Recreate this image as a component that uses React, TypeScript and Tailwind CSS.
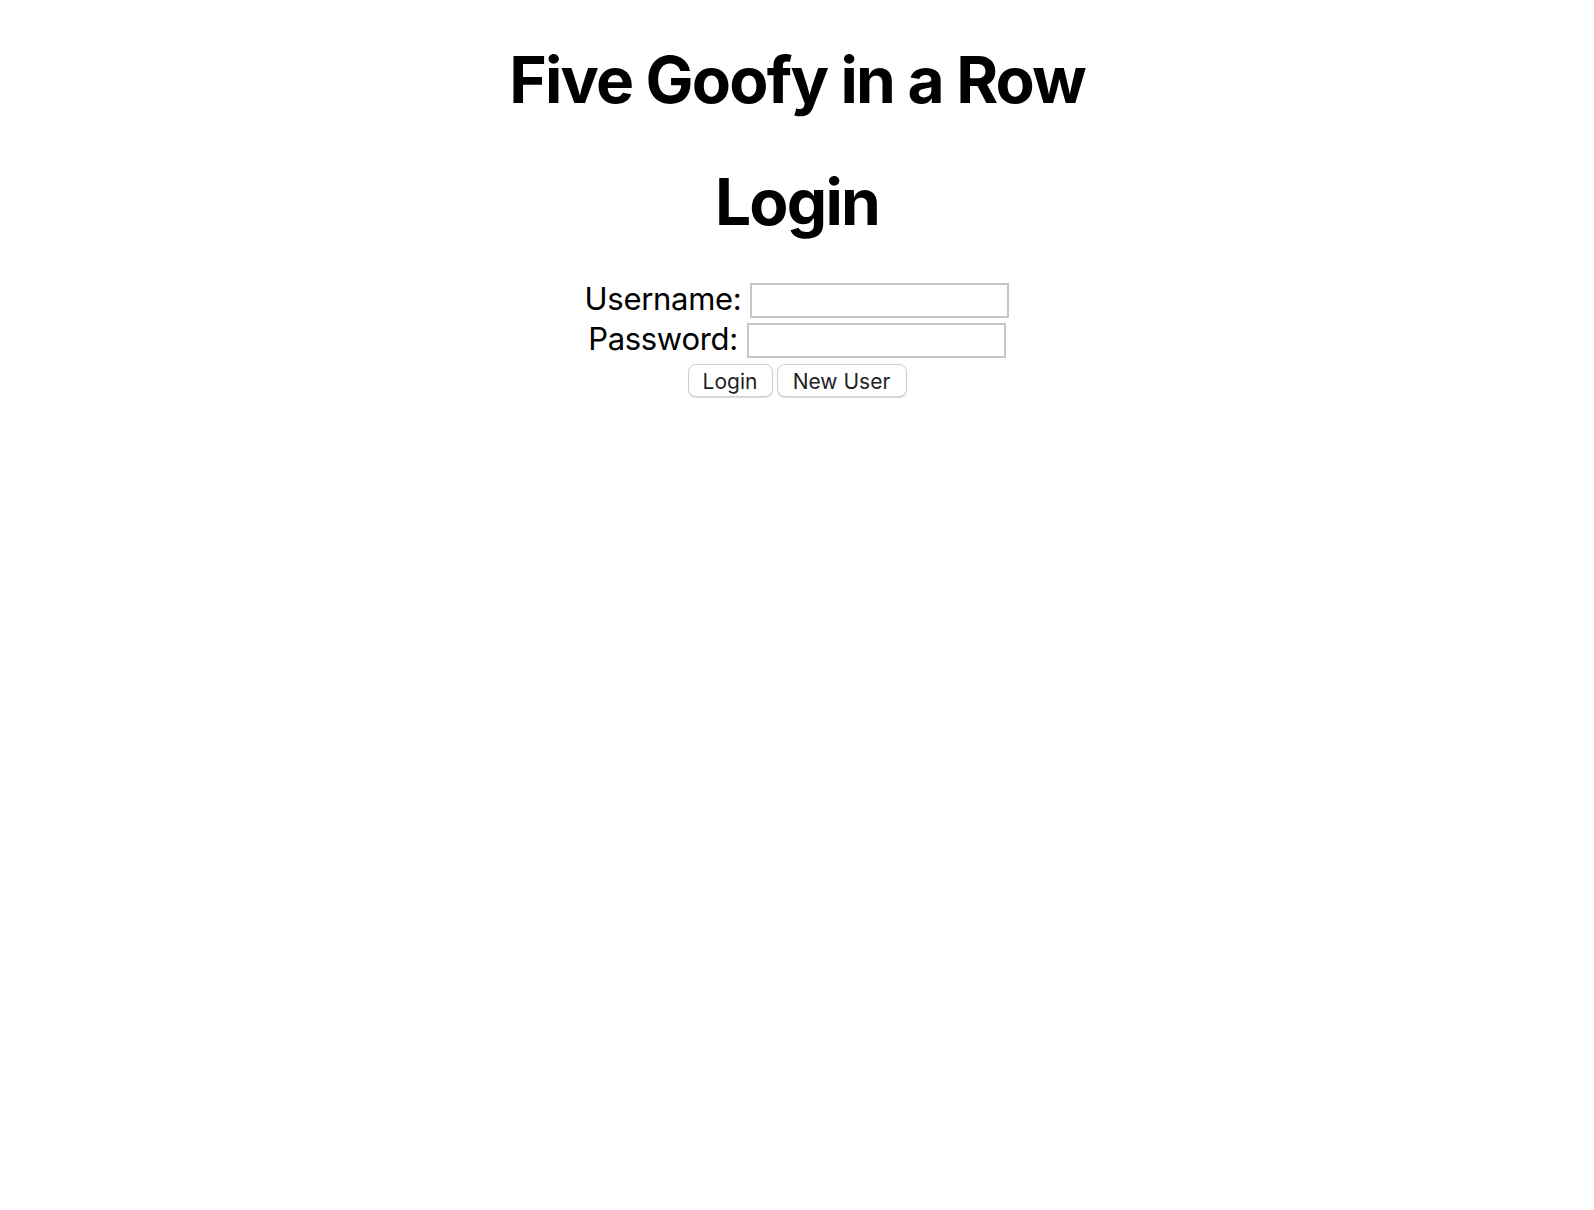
import React from "react";

export default function App() {
  return (
    <div
      className="min-h-[1210px] w-full bg-white text-black flex flex-col items-center"
      style={{ fontFamily: "Inter, 'Noto Sans', sans-serif" }}
    >
      <h1 className="mt-[41px] text-[64px] font-bold leading-[78px] tracking-[-1.8px]">
        Five Goofy in a Row
      </h1>
      <h1 className="mt-[44px] text-[64px] font-bold leading-[78px] tracking-[-1.8px]">
        Login
      </h1>
      <form
        className="mt-[42px] flex flex-col items-center"
        onSubmit={(e) => e.preventDefault()}
      >
        <div className="flex h-[40px] items-start gap-[9px]">
          <label className="text-[31px] leading-[36px] mt-[-2px] tracking-[-0.3px]">Username:</label>
          <input
            type="text"
            className="h-[35px] w-[259px] border-2 border-[#c6c6c6] bg-white outline-none"
          />
        </div>
        <div className="flex h-[41px] items-start gap-[9px]">
          <label className="text-[31px] leading-[36px] mt-[-2px] tracking-[-0.3px]">Password:</label>
          <input
            type="password"
            className="h-[35px] w-[259px] border-2 border-[#c6c6c6] bg-white outline-none"
          />
        </div>
        <div className="flex gap-[4px]">
          <button
            type="button"
            className="h-[33px] w-[85px] rounded-[8px] border border-[#cfcfcf] bg-white pt-[2px] text-[21px] leading-none text-[#222] shadow-[0_1px_1px_rgba(0,0,0,0.15)]"
          >
            Login
          </button>
          <button
            type="button"
            className="h-[33px] w-[130px] rounded-[8px] border border-[#cfcfcf] bg-white pt-[2px] text-[21px] leading-none text-[#222] shadow-[0_1px_1px_rgba(0,0,0,0.15)]"
          >
            New User
          </button>
        </div>
      </form>
    </div>
  );
}
